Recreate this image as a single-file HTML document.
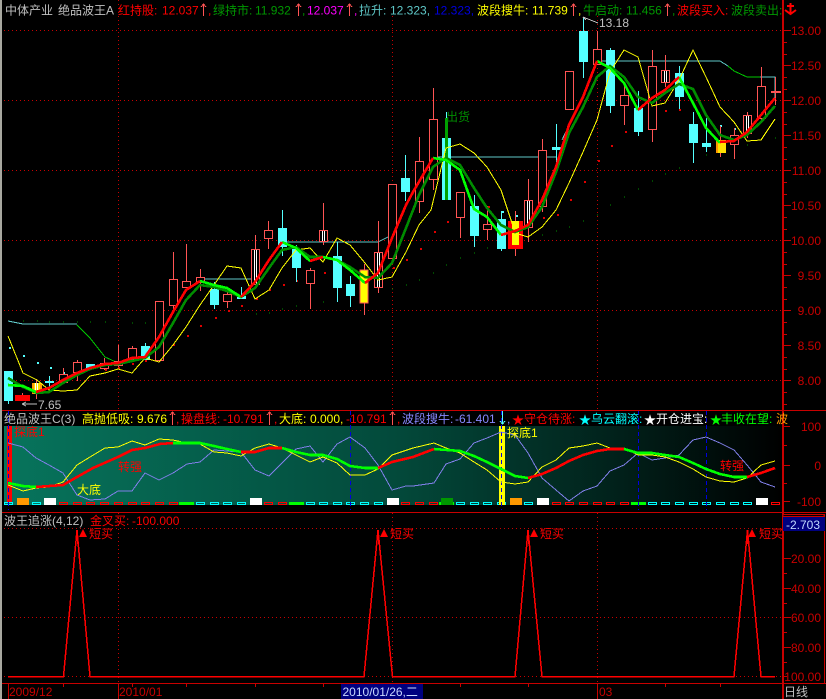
<!DOCTYPE html>
<html><head><meta charset="utf-8"><style>
html,body{margin:0;padding:0;background:#000;width:826px;height:699px;overflow:hidden}
svg{display:block}
polyline{shape-rendering:crispEdges}
text{font-family:"Liberation Sans","WenQuanYi Zen Hei","Noto Sans CJK SC",sans-serif;font-size:12px}
</style></head><body>
<svg width="826" height="699" viewBox="0 0 826 699" xmlns="http://www.w3.org/2000/svg">
<defs><linearGradient id="g" x1="0" x2="1" y1="0" y2="0"><stop offset="0" stop-color="#07745c"/><stop offset=".5" stop-color="#034a3b"/><stop offset=".8" stop-color="#011f19"/><stop offset="1" stop-color="#000"/></linearGradient></defs>
<rect width="826" height="699" fill="#000"/>
<rect x="0" y="0" width="2" height="699" fill="#a8a8a0"/>
<!-- indicator panel bg -->
<rect x="4" y="426" width="778" height="79" fill="url(#g)"/>
<!-- grid -->
<g stroke="#c80000" stroke-width="1" stroke-dasharray="1 3" shape-rendering="crispEdges" fill="none">
<path d="M4 30.5H782M4 100.5H782M4 170.5H782M4 240.5H782M4 310.5H782M4 380.5H782"/>
<path d="M4 528.5H782M4 617.5H782M4 676.5H782"/>
<path d="M118.5 0V410M392.5 16V410M597.5 16V410M118.5 513V683M392.5 513V683M597.5 513V683"/>
</g>
<!-- borders -->
<g stroke="#c80000" shape-rendering="crispEdges" fill="none">
<path d="M2 410.5H826M2 512.5H826M2 683.5H826"/>
<path d="M782.5 0V699M783.5 0V699" />
<path d="M824.5 514V683"/>
<path d="M8.5 684V699M118.5 684V699M597.5 684V699M63.5 684v3M132.5 684v3M186.5 684v3M255.5 684v3M323.5 684v3M460.5 684v3M528.5 684v3M665.5 684v3M720.5 684v3"/>
<path d="M783 30.5h8M783 65.5h8M783 100.5h8M783 135.5h8M783 170.5h8M783 205.5h8M783 240.5h8M783 275.5h8M783 310.5h8M783 345.5h8M783 380.5h8"/>
<path d="M783 42.5h4M783 54.5h4M783 77.5h4M783 89.5h4M783 112.5h4M783 124.5h4M783 147.5h4M783 159.5h4M783 182.5h4M783 194.5h4M783 217.5h4M783 229.5h4M783 252.5h4M783 264.5h4M783 287.5h4M783 299.5h4M783 322.5h4M783 334.5h4M783 357.5h4M783 369.5h4M783 392.5h4M783 404.5h4"/>
<path d="M783 426.5h7M783 465.5h7M783 501.5h7M783 445.5h4M783 483.5h4"/>
<path d="M784 558.5h7M784 588.5h7M784 617.5h7M784 647.5h7M784 676.5h3" stroke-width="1"/>
<path d="M784 573.5h3M784 603.5h3M784 632.5h3M784 662.5h3"/>
</g>
<!-- small dots -->
<path fill="none" stroke="#e00000" stroke-width="2" shape-rendering="crispEdges" d="M570 200h2M584 182h2M598 161h2M611 146h2M625 132h2M639 124h2M652 117h2M665 111h2M679 110h2M420 249h2M434 232h2M447 222h2M461 212h2M475 208h2M488 207h2M543 218h2M557 215h2M105 370h2M118 368h2M132 364h2M145 361h2M159 355h2M173 345h2M187 336h2M200 326h2M215 318h2M228 311h2M241 306h2M256 299h2M269 290h2M283 285h2M296 281h2M311 278h2M324 273h2M338 271h2M393 268h2M406 260h2"/>
<path fill="none" stroke="#009000" stroke-width="1" shape-rendering="crispEdges" d="M419 280h1M433 273h1M446 265h1M460 258h1M474 253h1M487 248h1M501 244h1M515 241h1M542 235h1M556 231h1M569 227h1M583 221h1M597 215h1M610 205h1M624 197h1M638 189h1M652 181h1M665 174h1M679 168h1M706 155h1M747 145h1M775 138h1M23 321h1M37 321h1M49 322h1M63 322h1M77 322h1M90 322h1M105 322h1M132 323h1M145 323h1M256 314h1M269 313h1M282 309h1M296 306h1M323 302h1M378 292h1M392 289h1M406 285h1"/>
<path fill="none" stroke="#54ffff" stroke-width="2" shape-rendering="crispEdges" d="M9 348h2M23 356h2M37 363h2M50 368h2M63 373h2M502 212h2M516 216h2M720 126h2M734 129h2"/>
<!-- thin cyan/green limit line -->
<g fill="none" stroke-width="1" shape-rendering="crispEdges">
<path stroke="#5fc8c8" d="M8 321L23 324H77M200 279H255M282 242H378L392 235M433 157H556M562 140L570 123M597 61H720L728 66"/>
<path stroke="#00c800" d="M77 325L90 338L105 357L118 363M728 66L734 71L747 77H760"/>
<path stroke="#5fc8c8" d="M760 77H775V100"/>
</g>
<!-- candles: wicks + bodies -->
<g shape-rendering="crispEdges">
<g stroke="#ff5454" fill="none">
<path d="M63.5 368V384M77.5 360V381M104.5 358V370M118.5 345V367M132.5 346V361M173.5 252V312M186.5 244V288M200.5 269V291M227.5 292V308M268.5 221V249M310.5 268V309M392.5 184V264M419.5 137V213M433.5 88V190M460.5 192V238M487.5 206V240M542.5 139V212M597.5 31V64M624.5 83V125M652.5 50V142M734.5 128V159M761.5 67V122M775.5 77V105M255.5 235V285M323.5 203V245M378.5 221V293M528.5 179V242M665.5 55V87M747.5 112V138M364.5 264V315M515.5 211V256M720.5 126V157M36.5 379V399M22.5 393V401"/>
</g>
<g stroke="#ff5454" fill="#000">
<rect x="59.5" y="374.5" width="8" height="8"/><rect x="73.5" y="362.5" width="8" height="10"/><rect x="100.5" y="363.5" width="8" height="5"/><rect x="114.5" y="361.5" width="8" height="4"/><rect x="128.5" y="348.5" width="8" height="11"/><rect x="155.5" y="301.5" width="8" height="59"/><rect x="169.5" y="279.5" width="8" height="26"/><rect x="182.5" y="281.5" width="8" height="6"/><rect x="196.5" y="277.5" width="8" height="5"/><rect x="223.5" y="294.5" width="8" height="7"/><rect x="264.5" y="230.5" width="8" height="8"/><rect x="306.5" y="270.5" width="8" height="13"/><rect x="388.5" y="184.5" width="8" height="74"/><rect x="415.5" y="161.5" width="8" height="40"/><rect x="429.5" y="119.5" width="8" height="60"/><rect x="456.5" y="192.5" width="8" height="25"/><rect x="483.5" y="224.5" width="8" height="5"/><rect x="538.5" y="150.5" width="8" height="56"/><rect x="565.5" y="71.5" width="8" height="38"/><rect x="593.5" y="49.5" width="8" height="15"/><rect x="620.5" y="95.5" width="8" height="10"/><rect x="648.5" y="66.5" width="8" height="63"/><rect x="730.5" y="135.5" width="8" height="9"/><rect x="757.5" y="86.5" width="8" height="32"/>
<rect x="251.5" y="249.5" width="8" height="35"/><rect x="319.5" y="230.5" width="8" height="11"/><rect x="374.5" y="252.5" width="8" height="35"/><rect x="524.5" y="200.5" width="8" height="27"/><rect x="661.5" y="70.5" width="8" height="12"/><rect x="743.5" y="115.5" width="8" height="18"/>
</g>
<path fill="none" stroke="#fff" d="M254.5 250V284M256.5 250V284M322.5 231V241M324.5 231V241M377.5 253V287M379.5 253V287M527.5 201V227M529.5 201V227M664.5 71V82M666.5 71V82M746.5 116V133M748.5 116V133"/>
<!-- cyan -->
<path fill="none" stroke="#54ffff" d="M8.5 371V404M49.5 376V387M145.5 343V360M214.5 282V309M241.5 287V299M282.5 210V256M296.5 245V282M337.5 242V302M350.5 276V307M405.5 155V201M446.5 112V200M474.5 195V247M501.5 211V251M556.5 124V163M583.5 17V78M610.5 48V113M638.5 91V136M679.5 66V109M693.5 112V163M706.5 118V152"/>
<g fill="#54ffff">
<rect x="4" y="371" width="9" height="30"/><rect x="45" y="381" width="9" height="2"/><rect x="86" y="364" width="9" height="4"/><rect x="141" y="346" width="9" height="14"/><rect x="210" y="289" width="9" height="16"/><rect x="237" y="296" width="9" height="3"/><rect x="278" y="228" width="9" height="19"/><rect x="292" y="249" width="9" height="19"/><rect x="333" y="256" width="9" height="32"/><rect x="346" y="284" width="9" height="12"/><rect x="401" y="178" width="9" height="14"/><rect x="442" y="138" width="9" height="62"/><rect x="470" y="206" width="9" height="30"/><rect x="497" y="219" width="9" height="30"/><rect x="552" y="147" width="9" height="3"/><rect x="579" y="31" width="9" height="31"/><rect x="606" y="50" width="9" height="56"/><rect x="634" y="108" width="9" height="24"/><rect x="675" y="73" width="9" height="24"/><rect x="689" y="124" width="9" height="19"/><rect x="702" y="143" width="9" height="4"/>
</g>
<!-- specials -->
<rect x="15" y="395" width="15" height="6" fill="#ff0000"/>
<rect x="32" y="383" width="10" height="11" fill="#ff9900"/><rect x="34" y="383" width="6" height="11" fill="#ffe000"/><path stroke="#fff" fill="none" d="M35.5 383V394M37.5 383V394"/>
<rect x="360" y="270" width="8" height="33" fill="#ffff00" stroke="#ff5454"/>
<rect x="508" y="221" width="15" height="28" fill="#ff0000"/><rect x="512" y="221" width="7" height="24" fill="#ffff00"/>
<rect x="716" y="140" width="10" height="13" fill="#ff9900"/><rect x="718" y="140" width="8" height="13" fill="#ffe000"/>
<rect x="771" y="91" width="10" height="2" fill="#ff5454"/>
<rect x="445" y="118" width="3" height="82" fill="#00a000"/>
</g>
<!-- yellow thin main -->
<polyline fill="none" stroke="#ffff00" stroke-width="1" points="8,336 23,373 37,380 49,390 63,391 77,390 90,376 105,373 118,369 132,373 145,358 159,362 173,345 186,327 200,305 214,285 227,266 241,268 255,299 269,290 282,268 296,250 310,248 323,262 337,238 350,245 365,263 378,280 392,277 406,252 419,225 431,210 446,148 460,144 474,153 487,167 501,190 506,205 512,223 515,233 528,237 542,227 556,210 569,183 583,152 597,120 610,72 624,50 638,57 652,106 665,103 679,80 693,50 706,77 720,107 734,122 747,141 761,140 775,119"/>
<!-- dark green -->
<polyline fill="none" stroke="#008c00" stroke-width="2.6" stroke-linejoin="round" points="8,378 23,387 37,393 49,392 63,383 77,375 90,369 105,365 118,364 132,361 145,358 159,347 173,323 186,300 200,285 214,287 227,291 241,297 255,288 269,268 282,250 296,247 310,257 323,257 337,260 350,267 365,277 378,278 392,263 406,228 419,195 433,167 446,158 460,165 474,188 487,208 501,225 515,232 528,227 542,207 556,172 569,133 583,107 597,77 610,66 624,77 638,97 652,103 665,93 679,84 693,89 706,115 720,135 734,140 747,135 761,122 775,106"/>
<!-- bright green -->
<g fill="none" stroke="#00ff00" stroke-width="2.6" stroke-linejoin="round">
<polyline points="8,385 23,386 36,392"/>
<polyline points="200,281 214,285 227,288 241,297"/>
<polyline points="282,242 296,248 310,261"/>
<polyline points="323,257 337,260 350,270 365,283"/>
<polyline points="433,158 446,160 460,170 474,209 487,217 501,235"/>
<polyline points="597,61 610,68 624,83 638,110"/>
<polyline points="679,77 693,103 706,128 720,143"/>
</g>
<!-- red thick -->
<g fill="none" stroke="#ff0000" stroke-width="2.6" stroke-linejoin="round">
<polyline points="36,392 49,388 63,380 77,373 90,368 105,364 118,363 132,358 145,357 159,337 173,312 186,290 200,281"/>
<polyline points="241,297 255,282 269,260 282,242"/>
<polyline points="310,261 323,257"/>
<polyline points="365,283 378,273 392,238 406,205 413,192 433,158"/>
<polyline points="501,235 515,231 528,225 542,200 556,167 569,125 583,97 597,61"/>
<polyline points="638,110 652,98 665,90 679,77"/>
<polyline points="720,142 734,141 747,132 761,115 775,98"/>
</g>
<!-- annotations main -->
<path fill="none" stroke="#c0c0c0" shape-rendering="crispEdges" d="M583 17L598 23M583 17l3 3M22 404H37M22 404l4-2M22 404l4 2"/>
<text x="599" y="27" fill="#c0c0c0">13.18</text>
<text x="38" y="409" fill="#c0c0c0">7.65</text>
<text x="446" y="121" fill="#008c00">出货</text>

<!-- indicator bottom bars -->
<g shape-rendering="crispEdges">
<g fill="none" stroke="#00ffff">
<rect x="4.5" y="502.5" width="8" height="2"/><rect x="32.5" y="502.5" width="8" height="2"/><rect x="196.5" y="502.5" width="8" height="2"/><rect x="210.5" y="502.5" width="8" height="2"/><rect x="223.5" y="502.5" width="8" height="2"/><rect x="237.5" y="502.5" width="8" height="2"/><rect x="306.5" y="502.5" width="8" height="2"/><rect x="319.5" y="502.5" width="8" height="2"/><rect x="333.5" y="502.5" width="8" height="2"/><rect x="346.5" y="502.5" width="8" height="2"/><rect x="360.5" y="502.5" width="8" height="2"/><rect x="374.5" y="502.5" width="8" height="2"/><rect x="456.5" y="502.5" width="8" height="2"/><rect x="470.5" y="502.5" width="8" height="2"/><rect x="483.5" y="502.5" width="8" height="2"/><rect x="497.5" y="502.5" width="8" height="2"/><rect x="524.5" y="502.5" width="8" height="2"/><rect x="648.5" y="502.5" width="8" height="2"/><rect x="661.5" y="502.5" width="8" height="2"/><rect x="675.5" y="502.5" width="8" height="2"/><rect x="689.5" y="502.5" width="8" height="2"/><rect x="702.5" y="502.5" width="8" height="2"/><rect x="716.5" y="502.5" width="8" height="2"/><rect x="730.5" y="502.5" width="8" height="2"/><rect x="743.5" y="502.5" width="8" height="2"/>
</g>
<g fill="none" stroke="#ff0000">
<rect x="59.5" y="502.5" width="8" height="2"/><rect x="73.5" y="502.5" width="8" height="2"/><rect x="86.5" y="502.5" width="8" height="2"/><rect x="100.5" y="502.5" width="8" height="2"/><rect x="114.5" y="502.5" width="8" height="2"/><rect x="128.5" y="502.5" width="8" height="2"/><rect x="141.5" y="502.5" width="8" height="2"/><rect x="155.5" y="502.5" width="8" height="2"/><rect x="169.5" y="502.5" width="8" height="2"/><rect x="264.5" y="502.5" width="8" height="2"/><rect x="278.5" y="502.5" width="8" height="2"/><rect x="401.5" y="502.5" width="8" height="2"/><rect x="415.5" y="502.5" width="8" height="2"/><rect x="429.5" y="502.5" width="8" height="2"/><rect x="552.5" y="502.5" width="8" height="2"/><rect x="565.5" y="502.5" width="8" height="2"/><rect x="579.5" y="502.5" width="8" height="2"/><rect x="593.5" y="502.5" width="8" height="2"/><rect x="606.5" y="502.5" width="8" height="2"/><rect x="620.5" y="502.5" width="8" height="2"/><rect x="771.5" y="502.5" width="8" height="2"/>
</g>
<rect x="17" y="498" width="12" height="7" fill="#ff9900"/><rect x="44" y="498" width="12" height="7" fill="#fff"/><rect x="250" y="498" width="12" height="7" fill="#fff"/><rect x="387" y="498" width="12" height="7" fill="#fff"/><rect x="510" y="498" width="12" height="7" fill="#ff9900"/><rect x="537" y="498" width="12" height="7" fill="#fff"/><rect x="756" y="498" width="12" height="7" fill="#fff"/>
<rect x="179" y="502" width="15" height="3" fill="#00ff00"/><rect x="289" y="502" width="15" height="3" fill="#00ff00"/><rect x="439" y="502" width="15" height="3" fill="#00ff00"/><rect x="441" y="498" width="12" height="7" fill="#009800"/><rect x="631" y="502" width="15" height="3" fill="#00ff00"/>
<!-- red & yellow vertical bars -->
<rect x="7" y="426" width="5" height="76" fill="#ff0000"/>
<rect x="499" y="426" width="6" height="79" fill="#ffff00"/>
<path fill="none" stroke="#0000e0" stroke-dasharray="4 3" d="M8.5 411V510M350.5 411V510M501.5 411V510M638.5 411V510M706.5 411V510"/>
</g>
<!-- indicator lines -->
<polyline fill="none" stroke="#7f7fe8" stroke-width="1" points="8,443 23,447 36,458 49,465 63,473 77,495 90,500 105,499 118,491 132,491 145,473 159,480 173,473 187,464 200,462 214,450 227,451 241,452 255,470 269,476 282,463 296,449 310,446 323,462 337,444 350,437 365,448 378,465 392,490 406,486 413,486 434,483 446,464 460,459 474,443 487,438 501,432 515,435 528,453 542,478 556,490 569,501 583,491 597,486 610,471 624,465 638,453 652,460 665,458 679,455 693,440 706,437 720,443 734,450 747,465 761,482 775,487"/>
<polyline fill="none" stroke="#ffff00" stroke-width="1" points="8,485 23,491 36,488 49,487 63,482 77,465 90,457 105,448 118,447 132,441 145,445 159,439 173,440 187,443 200,444 214,452 227,453 241,456 255,448 269,444 282,448 296,455 310,462 323,457 337,463 350,475 365,475 378,469 392,455 413,448 434,443 446,448 460,453 474,462 487,470 501,482 515,484 528,482 542,467 556,460 569,448 583,446 597,443 610,448 624,448 638,455 652,455 665,457 679,462 693,469 706,477 720,481 734,482 747,478 761,465 775,461"/>
<g fill="none" stroke="#00ff00" stroke-width="2.6">
<polyline points="8,483 23,486 36,487"/>
<polyline points="173,443 200,443 214,446 227,449 241,452"/>
<polyline points="282,448 296,452 310,455 323,455 337,459 350,466 365,468 378,468"/>
<polyline points="434,449 460,451 474,456 487,462 501,469 515,476 528,478"/>
<polyline points="624,449 638,453 652,453 665,455 679,457 693,463 706,469 720,474 734,477 747,477"/>
</g>
<g fill="none" stroke="#ff0000" stroke-width="2.6">
<polyline points="36,487 63,485 77,477 93,468 118,457 132,450 145,448 160,444 173,443"/>
<polyline points="241,452 255,452 269,448 282,448"/>
<polyline points="378,468 392,462 413,457 434,449"/>
<polyline points="528,478 542,474 556,468 569,461 583,455 597,451 610,449 624,449"/>
<polyline points="747,477 761,473 775,468"/>
</g>
<text x="14" y="436" fill="#ff0000">探底1</text>
<text x="118" y="471" fill="#ff0000">转强</text>
<text x="720" y="470" fill="#ff0000">转强</text>
<text x="77" y="494" fill="#ffff00">大底</text>
<text x="507" y="437" fill="#ffff00">探底1</text>
<!-- bottom chart -->
<path fill="none" stroke="#ff0000" stroke-width="1.5" shape-rendering="crispEdges" d="M8 676.5H63.5L77 530L90 676.5H364L378 530L392.5 676.5H515L528 530L542 676.5H734L747.5 530L761 676.5H775"/>
<g fill="#ff0000">
<path d="M79 537L83 529L87 537Z"/><path d="M380 537L384 529L388 537Z"/><path d="M530 537L534 529L538 537Z"/><path d="M748 537L752 529L756 537Z"/>
</g>
<path stroke="#ff0000" shape-rendering="crispEdges" d="M77.5 530v14M378.5 530v14M528.5 530v14M747.5 530v14" fill="none"/>
<text x="89" y="538" fill="#ff0000">短买</text><text x="390" y="538" fill="#ff0000">短买</text><text x="540" y="538" fill="#ff0000">短买</text><text x="759" y="538" fill="#ff0000">短买</text>

<!-- title row 1 -->
<text x="5" y="14.500" fill="#c0c0c0">中体产业</text>
<text x="58" y="14.500" fill="#c0c0c0">绝品波王A</text>
<text x="118" y="14.500" fill="#ff0000">红持股:</text><text x="162" y="14.500" fill="#ff0000">12.037</text>
<text x="208" y="14.500" fill="#ff0000">,</text>
<text x="213" y="14.500" fill="#009800">绿持市:</text><text x="255" y="14.500" fill="#009800">11.932</text>
<text x="302" y="14.500" fill="#009800">,</text>
<text x="307" y="14.500" fill="#ff00ff">12.037</text>
<text x="354" y="14.500" fill="#ff00ff">,</text>
<text x="359" y="14.500" fill="#5fc8c8">拉升:</text><text x="390" y="14.500" fill="#5fc8c8">12.323,</text>
<text x="434" y="14.500" fill="#0000e0">12.323,</text>
<text x="477" y="14.500" fill="#ffff00">波段搜牛:</text><text x="532" y="14.500" fill="#ffff00">11.739</text>
<text x="578" y="14.500" fill="#ffff00">,</text>
<text x="583" y="14.500" fill="#009800">牛启动:</text><text x="626" y="14.500" fill="#009800">11.456</text>
<text x="672" y="14.500" fill="#009800">,</text>
<text x="677" y="14.500" fill="#ff0000">波段买入:</text>
<text x="731" y="14.500" fill="#009800">波段卖出:</text>
<path fill="none" stroke="#ff5454" shape-rendering="crispEdges" d="M203.500 16V4M201 7l2.500-3l2.500 3M298.500 16V4M296 7l2.500-3l2.500 3M349.500 16V4M347 7l2.500-3l2.500 3M573.500 16V4M571 7l2.500-3l2.500 3M667.500 16V4M665 7l2.500-3l2.500 3"/>
<path fill="none" stroke="#ff0000" stroke-width="2" d="M790.500 3V13M787 6H794M785 10l5.500 4l5.500-4"/>
<!-- title row 2 -->
<text x="4" y="423" fill="#c0c0c0">绝品波王C(3)</text>
<text x="82" y="423" fill="#ffff00">高抛低吸:</text><text x="137" y="423" fill="#ffff00">9.676</text>
<text x="176" y="423" fill="#ff0000">,</text>
<text x="181" y="423" fill="#ff0000">操盘线:</text><text x="223" y="423" fill="#ff0000">-10.791</text>
<text x="274" y="423" fill="#ff0000">,</text>
<text x="279" y="423" fill="#ffff00">大底:</text><text x="310" y="423" fill="#ffff00">0.000,</text>
<text x="346" y="423" fill="#ff0000">-10.791</text>
<text x="397" y="423" fill="#ff0000">,</text>
<text x="402" y="423" fill="#8888ff">波段搜牛:</text><text x="455" y="423" fill="#8888ff">-61.401</text>
<text x="507" y="423" fill="#8888ff">,</text>
<text x="512" y="424" fill="#ff0000">★</text><text x="524" y="423" fill="#ff0000">守仓待涨:</text>
<text x="579" y="424" fill="#00ffff">★</text><text x="591" y="423" fill="#00ffff">乌云翻滚:</text>
<text x="644" y="424" fill="#fff">★</text><text x="656" y="423" fill="#fff">开仓进宝:</text>
<text x="710" y="424" fill="#00ff00">★</text><text x="721" y="423" fill="#00ff00">丰收在望:</text>
<text x="776" y="423" fill="#ff9900">波</text>
<path fill="none" stroke="#ff5454" shape-rendering="crispEdges" d="M172.500 425V412M170 415l2.500-3l2.500 3M269.500 425V412M267 415l2.500-3l2.500 3M392.500 425V412M390 415l2.500-3l2.500 3"/>
<path fill="none" stroke="#54ffff" shape-rendering="crispEdges" d="M502.500 411V424M500 421l2.500 3l2.500-3"/>
<!-- title row 3 -->
<text x="4" y="525" fill="#c0c0c0">波王追涨(4,12)</text>
<text x="90" y="525" fill="#ff0000">金叉买:</text><text x="132" y="525" fill="#ff0000">-100.000</text>
<!-- axis labels -->
<g fill="#c80000" text-anchor="end">
<text x="821" y="35">13.00</text><text x="821" y="70">12.50</text><text x="821" y="105">12.00</text><text x="821" y="140">11.50</text><text x="821" y="175">11.00</text><text x="821" y="210">10.50</text><text x="821" y="245">10.00</text><text x="821" y="280">9.50</text><text x="821" y="315">9.00</text><text x="821" y="350">8.50</text><text x="821" y="385">8.00</text>
<text x="821" y="431">100</text><text x="821" y="470">0</text><text x="821" y="506">-100</text>
<text x="821" y="563">20.00</text><text x="821" y="593">40.00</text><text x="821" y="622">60.00</text><text x="821" y="652">80.00</text><text x="821" y="681">100.00</text>
</g>
<!-- value box -->
<rect x="783" y="514.500" width="41" height="2" fill="#000" stroke="#c80000"/>
<rect x="783" y="517" width="42" height="14" fill="#000080"/>
<text x="786" y="529" fill="#c0d8ff">-2.703</text>
<!-- date axis -->
<rect x="341" y="684" width="82" height="15" fill="#000080"/>
<g fill="#c80000"><text x="9" y="696">2009/12</text><text x="119" y="696">2010/01</text><text x="599" y="696">03</text></g>
<text x="342.500" y="696" fill="#c8d8ff">2010/01/26,二</text>
<text x="784" y="696" fill="#c0c0c0">日线</text>
</svg>
</body></html>
